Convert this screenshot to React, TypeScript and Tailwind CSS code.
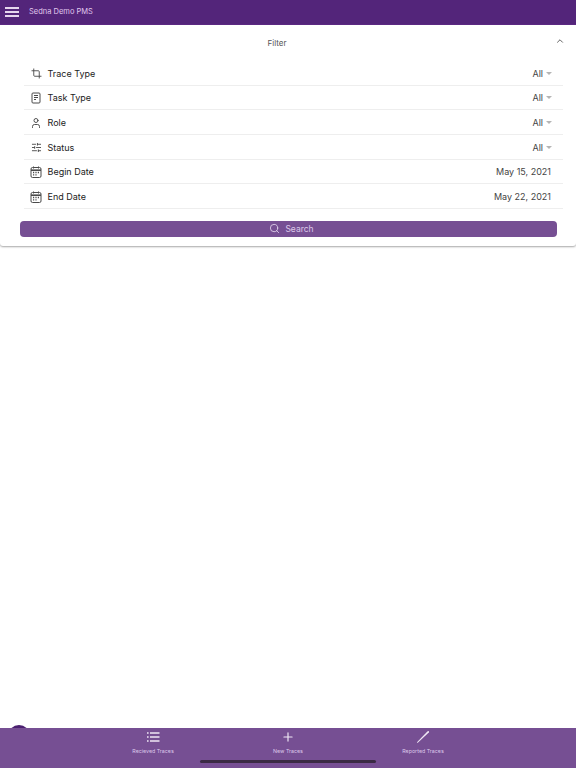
import { Search, ChevronUp, Crop, User, SlidersHorizontal, Plus } from 'lucide-react';

function CalendarIcon() {
  return (
    <svg width="12" height="12" viewBox="0 0 12 12" fill="none" stroke="#4a4a4a" strokeWidth="1">
      <rect x="1" y="1.5" width="10" height="10" rx="1.5" />
      <path d="M1 4.2h10" strokeWidth="1.6" />
      <path d="M3.5 0.5v2M8.5 0.5v2" />
      <path d="M3 6.5h1.2M5.4 6.5h1.2M7.8 6.5h1.2M3 8.8h1.2M5.4 8.8h1.2" strokeWidth="1.3" />
    </svg>
  );
}

function TaskIcon() {
  return (
    <svg width="12" height="12" viewBox="0 0 12 12" fill="none" stroke="#4a4a4a" strokeWidth="1">
      <rect x="2" y="1" width="8" height="10" rx="1" />
      <path d="M4 3.5h4M4 5.5h4M4 7.5h2" />
    </svg>
  );
}

function ListIcon() {
  return (
    <svg width="14" height="12" viewBox="0 0 14 12" fill="none" stroke="#f0e8f5" strokeWidth="1.4">
      <path d="M1 2h1.6M1 6h1.6M1 10h1.6M4 2h9.5M4 6h9.5M4 10h9.5" />
    </svg>
  );
}

function FilterRow({ icon, label, value, caret }: { icon: React.ReactNode; label: string; value: string; caret?: boolean }) {
  return (
    <div className="h-[24.67px] flex items-center border-b border-[#eeeeee] pl-[6px] pr-[12px] pt-[1px]">
      <div className="w-[12px] flex justify-center">{icon}</div>
      <span className="ml-[5.5px] text-[9px] text-[#222222]">{label}</span>
      <span className="ml-auto text-[9px] text-[#444444]">{value}</span>
      {caret && <span className="ml-[3px] mr-[-1px] w-0 h-0 border-x-[3px] border-x-transparent border-t-[3px] border-t-[#b5b5b5]" />}
    </div>
  );
}

function TabItem({ icon, label }: { icon: React.ReactNode; label: string }) {
  return (
    <div className="w-[135px] flex flex-col items-center">
      <div className="h-[18px] flex items-center justify-center">{icon}</div>
      <span className="mt-[1px] text-[5.3px] leading-[8px] text-[#dcc8ea]">{label}</span>
    </div>
  );
}

export default function App() {
  return (
    <div className="relative w-[576px] h-[768px] flex flex-col bg-white overflow-hidden antialiased font-['Inter',sans-serif]">
      <div className="h-[25px] shrink-0 bg-[#53257a] flex items-center pl-[5px] border-b border-[#5d2a85]">
        <div className="w-[14px] flex flex-col gap-[2.5px]">
          <div className="h-[1.5px] bg-[#e6d6ee]" />
          <div className="h-[1.5px] bg-[#e6d6ee]" />
          <div className="h-[1.5px] bg-[#e6d6ee]" />
        </div>
        <span className="ml-[10px] text-[7.5px] text-[#e0c9ee]">Sedna Demo PMS</span>
      </div>

      <div className="h-[221px] shrink-0 bg-white shadow-[0_1px_2px_rgba(0,0,0,0.35)] rounded-b-[3px] flex flex-col">
        <div className="relative h-[36px] shrink-0 flex items-center justify-center">
          <span className="text-[8px] text-[#555555] mr-[22px]">Filter</span>
          <ChevronUp className="absolute right-[11px] top-[11px] w-[10px] h-[10px] text-[#555555]" strokeWidth={2.2} />
        </div>
        <div className="mx-[24px] w-[539px] flex flex-col">
          <FilterRow icon={<Crop className="w-[11px] h-[11px] text-[#4a4a4a]" strokeWidth={2} />} label="Trace Type" value="All" caret />
          <FilterRow icon={<TaskIcon />} label="Task Type" value="All" caret />
          <FilterRow icon={<User className="w-[12px] h-[12px] text-[#4a4a4a]" strokeWidth={1.9} />} label="Role" value="All" caret />
          <FilterRow icon={<SlidersHorizontal className="w-[11px] h-[11px] text-[#4a4a4a]" strokeWidth={2} />} label="Status" value="All" caret />
          <FilterRow icon={<CalendarIcon />} label="Begin Date" value="May 15, 2021" />
          <FilterRow icon={<CalendarIcon />} label="End Date" value="May 22, 2021" />
        </div>
        <div className="mt-[12px] ml-[20px] w-[537px] h-[16px] rounded-[4px] bg-[#764f93] flex items-center justify-center gap-[5px] pl-[6px]">
          <Search className="w-[11px] h-[11px] text-[#e6d8ef]" strokeWidth={1.8} />
          <span className="text-[8.5px] text-[#dcc8ea]">Search</span>
        </div>
      </div>

      <div className="flex-1" />

      <div className="h-[40px] shrink-0 bg-[#764f93] flex justify-center">
        <TabItem icon={<ListIcon />} label="Recieved Traces" />
        <TabItem icon={<Plus className="w-[14px] h-[14px] text-[#f0e8f5]" strokeWidth={2} />} label="New Traces" />
        <TabItem
          icon={
            <svg width="14" height="14" viewBox="0 0 14 14" fill="#f0e8f5">
              <path d="M1.5 13 1 12.2 11.6 1.2 13 1 12.8 2.4Z" />
            </svg>
          }
          label="Reported Traces"
        />
      </div>

      {/* fab peeking out from behind the tab bar */}
      <div className="absolute left-[8px] top-[725px] w-[22px] h-[3px] overflow-hidden">
        <div className="w-[22px] h-[22px] rounded-full bg-[#4b2070]" />
      </div>
      <div className="absolute left-[200px] top-[760px] w-[176px] h-[3px] rounded-full bg-[#3a2a44]" />
    </div>
  );
}
